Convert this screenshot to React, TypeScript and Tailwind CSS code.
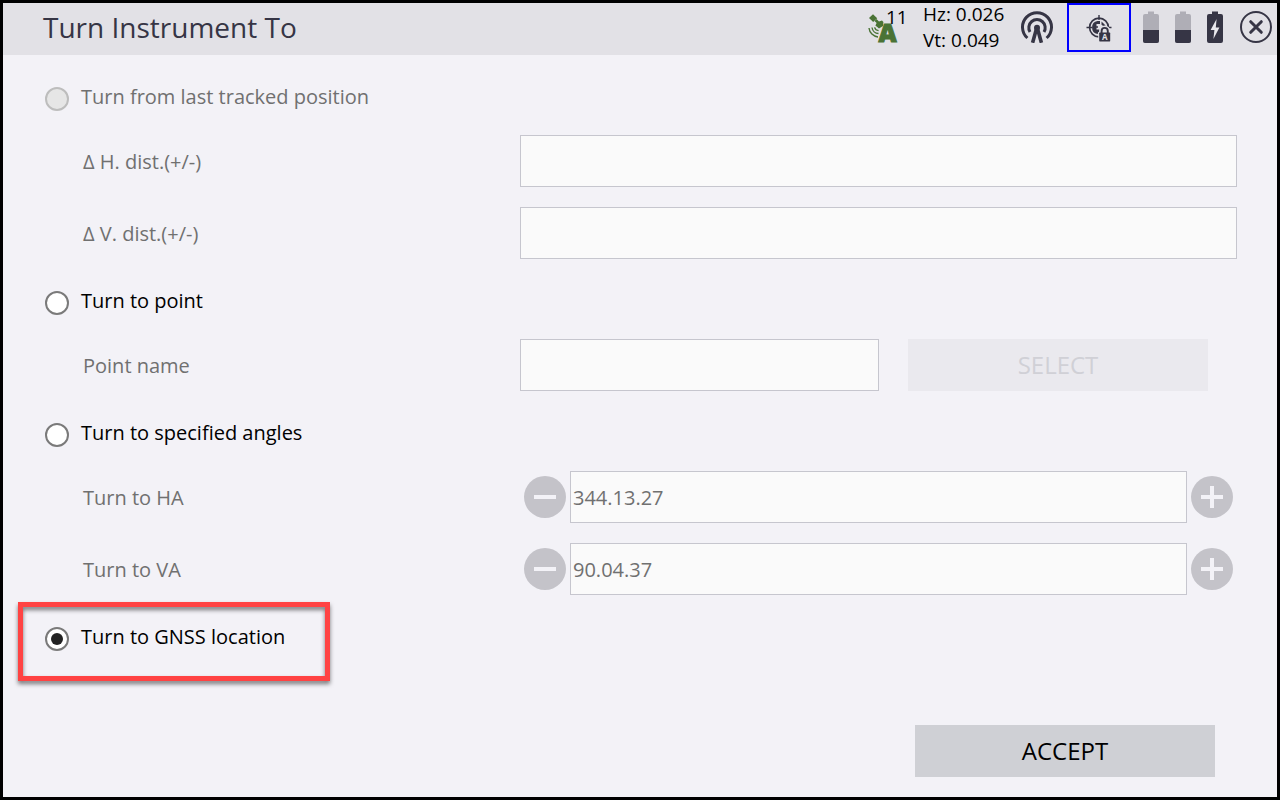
import React, { useState } from 'react';

type Mode = 'tracked' | 'point' | 'angles' | 'gnss';

const INK = '#363545';

const SatelliteIcon = () => (
  <svg width="32" height="32" viewBox="0 0 32 32" className="overflow-visible" aria-hidden="true">
    <g fill="#4a7335">
      <path d="M2 7 L6 3.2 L10.2 7.2 L6.2 11 Z" />
      <path d="M7.5 10 L9.5 8 L12 10.4 L15 9.4 L16.4 11 L16 15 L12 17.6 L8.4 14.6 L9.6 12 Z" />
      <text x="11.6" y="30.6" fontSize="25" fontWeight="800" stroke="#4a7335" strokeWidth="1" fontFamily="Open Sans, sans-serif">A</text>
    </g>
    <g fill="none" stroke="#4a7335" strokeWidth="1.4">
      <path d="M2 17 A10 10 0 0 0 11 26" />
      <path d="M5 16.5 A7 7 0 0 0 11.5 22.5" />
      <path d="M7.6 16.4 A4.5 4.5 0 0 0 11.6 19.6" />
    </g>
  </svg>
);

const AntennaIcon = () => (
  <svg width="32" height="32" viewBox="0 0 32 32" fill="none" stroke={INK} aria-hidden="true">
    <path d="M6.4 27 A14.5 14.5 0 1 1 25.6 27" strokeWidth="3" />
    <path d="M9 21 A8.2 8.2 0 1 1 23 21" strokeWidth="3" />
    <path d="M11.6 31.8 L15.4 18 H16.6 L20.4 31.8" strokeWidth="3.6" />
    <circle cx="16" cy="16.8" r="3" fill={INK} stroke="none" />
  </svg>
);

const TargetLockIcon = () => (
  <svg width="26" height="28" viewBox="0 0 26 28" aria-hidden="true">
    <g fill="none" stroke={INK}>
      <circle cx="13" cy="13.5" r="9.4" strokeWidth="1.7" />
      <path d="M13 1 V6 M0.5 13.5 H6 M20 13.5 H25.5" strokeWidth="1.4" />
    </g>
    <path d="M11.5 7 A6.6 6.6 0 0 0 11.5 20 L13.5 17.5 V15.5 H10.5 V13.8 H12 V12.2 H10.5 V10 H14 V7 Z" fill={INK} />
    <path d="M15.5 7.4 L19.6 11.5 L18 12.5 L15.5 10.8 Z" fill={INK} />
    <rect x="12.2" y="18" width="13" height="10" fill="#e2e1e6" />
    <path d="M15.4 19.5 V17 A3.3 3.3 0 0 1 22 17 V19.5" fill="none" stroke="#e2e1e6" strokeWidth="4.4" />
    <path d="M15.6 20 V17 A3.1 3.1 0 0 1 21.8 17 V20" fill="none" stroke={INK} strokeWidth="1.9" />
    <rect x="13.2" y="18.6" width="11" height="8.8" rx="0.6" fill={INK} />
    <text x="18.7" y="26" fontSize="8" fontWeight="700" textAnchor="middle" fill="#e2e1e6" fontFamily="Open Sans, sans-serif">A</text>
  </svg>
);

const BatteryIcon = ({ charging = false }: { charging?: boolean }) => (
  <svg width="16" height="33" viewBox="0 0 16 33" aria-hidden="true">
    <path d="M5 0.5 H11 V3 H14 Q16 3 16 5 V30 Q16 32 14 32 H2 Q0 32 0 30 V5 Q0 3 2 3 H5 Z" fill={charging ? INK : '#afaeb6'} />
    {charging ? (
      <path d="M9.6 8 L3.6 19 H7.4 L6.4 28 L12.4 16.4 H8.8 Z" fill="#e9e8ed" />
    ) : (
      <path d="M0 19 H16 V30 Q16 32 14 32 H2 Q0 32 0 30 Z" fill={INK} />
    )}
  </svg>
);

const CloseIcon = () => (
  <svg width="32" height="32" viewBox="0 0 32 32" fill="none" stroke={INK} aria-hidden="true">
    <circle cx="16" cy="16" r="15" strokeWidth="2" />
    <path d="M10.7 10.7 L21.3 21.3 M21.3 10.7 L10.7 21.3" strokeWidth="3" strokeLinecap="round" />
  </svg>
);

interface OptionProps {
  value: Mode;
  label: string;
  mode: Mode;
  onChange: (mode: Mode) => void;
  disabled?: boolean;
  highlight?: boolean;
  children?: React.ReactNode;
}

const Option = ({ value, label, mode, onChange, disabled, highlight, children }: OptionProps) => (
  <section className="pt-8">
    <div className="relative flex h-6 items-start gap-3">
      <input
        type="radio"
        id={value}
        name="mode"
        checked={mode === value}
        disabled={disabled}
        onChange={() => onChange(value)}
        className="grid size-6 shrink-0 appearance-none place-items-center rounded-full border-2 border-[#7a7a7a] bg-white before:size-3 before:rounded-full checked:before:bg-[#222222] disabled:border-[#bdbdbd] disabled:bg-[#e6e6e6]"
      />
      <label htmlFor={value} className={`leading-5 ${disabled ? 'text-[#707070]' : 'text-black'}`}>
        {label}
      </label>
      {highlight && (
        <div className="pointer-events-none absolute -left-[27px] -top-[25px] h-[79px] w-[312px] border-5 border-[#ff4343] drop-shadow-[0_3px_2px_rgba(0,0,0,0.5)]" />
      )}
    </div>
    {children && <div className="mt-6 flex flex-col gap-5 pl-[38px]">{children}</div>}
  </section>
);

const Field = ({ id, label, children }: { id: string; label: string; children: React.ReactNode }) => (
  <div className="flex items-center">
    <label htmlFor={id} className="w-[437px] shrink-0 pt-0.5 text-[#707070]">{label}</label>
    <div className="flex min-w-0 flex-1 items-center">{children}</div>
  </div>
);

const inputClass = 'h-[52px] min-w-0 flex-1 border border-[#c6c6ce] bg-[#fafafa] px-0.5 text-[#707070]';
const roundButton = 'grid size-[42px] shrink-0 place-items-center rounded-full bg-[#c4c3c9]';

const Stepper = ({ id, value }: { id: string; value: string }) => (
  <div className="flex min-w-0 flex-1 items-center gap-1 px-1">
    <button type="button" aria-label="Decrease" disabled className={roundButton}>
      <svg width="22" height="22" viewBox="0 0 22 22" fill="#f3f2f7">
        <rect y="9" width="22" height="4" />
      </svg>
    </button>
    <input id={id} type="text" defaultValue={value} disabled className={inputClass} />
    <button type="button" aria-label="Increase" disabled className={roundButton}>
      <svg width="22" height="22" viewBox="0 0 22 22" fill="#f3f2f7">
        <rect y="9" width="22" height="4" />
        <rect x="9" width="4" height="22" />
      </svg>
    </button>
  </div>
);

const App = () => {
  const [mode, setMode] = useState<Mode>('gnss');

  return (
    <div className="flex min-h-screen flex-col border-3 border-black bg-[#f3f2f7] font-['Open_Sans',sans-serif] text-xl text-black">
      <header className="flex h-[52px] items-center bg-[#e2e1e6] pb-1 pl-10 pr-[5px]">
        <h1 className="flex-1 text-[28px] leading-9 text-[#363545]">Turn Instrument To</h1>
        <div className="relative w-14">
          <SatelliteIcon />
          <span className="absolute left-[19px] -top-1 text-[19px] leading-5">11</span>
        </div>
        <div className="w-[98px] text-[19px] leading-[26px]">
          <div>Hz: 0.026</div>
          <div>Vt: 0.049</div>
        </div>
        <AntennaIcon />
        <button type="button" aria-label="Target lock" className="ml-3.5 grid h-[49px] w-16 place-items-center self-start border-2 border-[#0000ff]">
          <TargetLockIcon />
        </button>
        <div className="ml-3 flex gap-4">
          <BatteryIcon />
          <BatteryIcon />
          <BatteryIcon charging />
        </div>
        <button type="button" aria-label="Close" className="ml-[17px]">
          <CloseIcon />
        </button>
      </header>

      <form className="flex flex-1 flex-col pb-5 pl-[42px] pr-10">
        <Option value="tracked" label="Turn from last tracked position" mode={mode} onChange={setMode} disabled>
          <Field id="hdist" label="Δ H. dist.(+/-)">
            <input id="hdist" type="text" disabled className={inputClass} />
          </Field>
          <Field id="vdist" label="Δ V. dist.(+/-)">
            <input id="vdist" type="text" disabled className={inputClass} />
          </Field>
        </Option>

        <Option value="point" label="Turn to point" mode={mode} onChange={setMode}>
          <Field id="pname" label="Point name">
            <div className="flex min-w-0 flex-1 gap-[29px] pr-[29px]">
              <input id="pname" type="text" disabled className={inputClass} />
              <button type="button" disabled className="h-[52px] w-[300px] bg-[#eae9ee] text-2xl text-[#d0d0d6]">
                SELECT
              </button>
            </div>
          </Field>
        </Option>

        <Option value="angles" label="Turn to specified angles" mode={mode} onChange={setMode}>
          <Field id="ha" label="Turn to HA">
            <Stepper id="ha" value="344.13.27" />
          </Field>
          <Field id="va" label="Turn to VA">
            <Stepper id="va" value="90.04.37" />
          </Field>
        </Option>

        <Option value="gnss" label="Turn to GNSS location" mode={mode} onChange={setMode} highlight />

        <div className="mt-auto flex justify-end pr-[22px]">
          <button type="button" className="h-[52px] w-[300px] bg-[#cfd0d5] text-2xl">
            ACCEPT
          </button>
        </div>
      </form>
    </div>
  );
};

export default App;
